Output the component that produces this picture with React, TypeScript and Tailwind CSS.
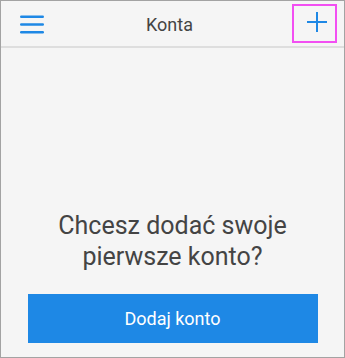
import React from "react";

export default function App() {
  return (
    <div
      className="w-[345px] h-[358px] border border-[#a3a3a3] bg-[#f5f5f5] flex flex-col"
      style={{ fontFamily: "Roboto, 'Liberation Sans', sans-serif" }}
    >
      <div className="h-[47px] shrink-0 border-b-2 border-[#dedede] flex items-center justify-between pl-[18px] pr-[7px]">
        <svg width="26" height="20" viewBox="0 0 26 20" className="mt-[1px]">
          <rect x="1" y="1.5" width="24" height="2.4" rx="1.2" fill="#1e88e5" />
          <rect x="1" y="9.3" width="24" height="2.4" rx="1.2" fill="#1e88e5" />
          <rect x="1" y="17" width="24" height="2.4" rx="1.2" fill="#1e88e5" />
        </svg>
        <div className="text-[18px] text-[#444444] leading-none mt-[2px] ml-[2px]">Konta</div>
        <div className="w-[45px] h-[39px] border-2 border-[#f24ff2] flex items-center justify-center">
          <svg width="20" height="20" viewBox="0 0 20 20" className="ml-[6px] -mt-[3px]">
            <rect x="9" y="0" width="2" height="20" fill="#1e88e5" />
            <rect x="0" y="9" width="20" height="2" fill="#1e88e5" />
          </svg>
        </div>
      </div>
      <div className="flex-1 flex flex-col items-center justify-end pb-[14px]">
        <div className="text-[25px] leading-[31px] text-[#444444] text-center mb-[22px]">
          Chcesz dodać swoje
          <br />
          pierwsze konto?
        </div>
        <button className="w-[290px] h-[49px] bg-[#1e88e5] text-white text-[18px] flex items-center justify-center">
          Dodaj konto
        </button>
      </div>
    </div>
  );
}
